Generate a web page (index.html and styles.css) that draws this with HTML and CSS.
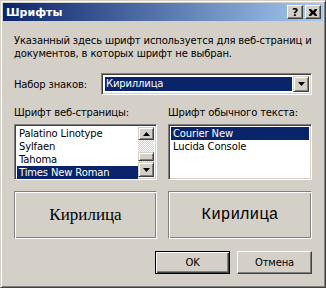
FILE: index.html
```html
<!DOCTYPE html>
<html lang="ru">
<head>
	<meta charset="UTF-8">
	<title>Шрифты</title>
	<link rel="stylesheet" href="styles.css">
</head>
<body>
	<div class="window">
		<div class="titlebar">
			<span class="title">Шрифты</span>
			<div class="tbtns">
				<span class="tbtn help">?</span>
				<span class="tbtn close">
					<svg width="8" height="7" viewBox="0 0 8 7"><path d="M0 0h2l2 2 2-2h2v1L6 3.5 8 6v1H6L4 5 2 7H0V6l2-2.5L0 1z" fill="#000"/></svg>
				</span>
			</div>
		</div>

		<div class="content">
			<p class="desc">Указанный здесь шрифт используется для веб-страниц и документов, в которых шрифт не выбран.</p>

			<div class="charset">
				<label>Набор знаков:</label>
				<div class="combo">
					<div class="combo_val"><span>Кириллица</span></div>
					<span class="arrowbtn">
						<svg width="7" height="4" viewBox="0 0 7 4"><path d="M0 0h7L3.5 4z" fill="#000"/></svg>
					</span>
				</div>
			</div>

			<div class="fonts">
				<div class="col">
					<div class="cap">Шрифт веб-страницы:</div>
					<div class="listbox">
						<ul>
							<li>Palatino Linotype</li>
							<li>Sylfaen</li>
							<li>Tahoma</li>
							<li class="cur">Times New Roman</li>
						</ul>
						<div class="vscroll">
							<span class="sbtn">
								<svg width="7" height="4" viewBox="0 0 7 4"><path d="M3.5 0L7 4H0z" fill="#000"/></svg>
							</span>
							<span class="track t1"></span>
							<span class="thumb"></span>
							<span class="track t2"></span>
							<span class="sbtn">
								<svg width="7" height="4" viewBox="0 0 7 4"><path d="M0 0h7L3.5 4z" fill="#000"/></svg>
							</span>
						</div>
					</div>
					<div class="preview serif">Кирилица</div>
				</div>
				<div class="col">
					<div class="cap">Шрифт обычного текста:</div>
					<div class="listbox">
						<ul>
							<li class="cur">Courier New</li>
							<li>Lucida Console</li>
						</ul>
					</div>
					<div class="preview mono">Кирилица</div>
				</div>
			</div>

			<div class="buttons">
				<button class="btn default">OK</button>
				<button class="btn">Отмена</button>
			</div>
		</div>
	</div>
</body>
</html>
```

FILE: styles.css
```css
*{
	margin: 0;
	padding: 0;
	box-sizing: border-box;
}
body{
	background: #d4d0c8;
	font-family: "DejaVu Sans", "Liberation Sans", sans-serif;
	font-size: 10px;
	letter-spacing: -0.15px;
	color: #000;
}
.window{
	width: 326px;
	height: 288px;
	background: #d4d0c8;
	border: 1px solid;
	border-color: #d4d0c8 #404040 #404040 #d4d0c8;
	box-shadow: inset 1px 1px 0 #fff, inset -1px -1px 0 #808080;
	padding: 2px;
}
.titlebar{
	height: 18px;
	background: linear-gradient(to right, #0a246a, #a6caf0);
	display: flex;
	align-items: center;
	justify-content: space-between;
	padding: 0 2px 0 3px;
}
.title{
	color: #fff;
	font-weight: bold;
	font-size: 11px;
	letter-spacing: 0;
}
.tbtns{
	display: flex;
	gap: 2px;
}
.tbtn{
	width: 16px;
	height: 14px;
	background: #d4d0c8;
	border: 1px solid;
	border-color: #fff #404040 #404040 #fff;
	box-shadow: inset -1px -1px 0 #808080;
	display: flex;
	align-items: center;
	justify-content: center;
	font-weight: bold;
	font-size: 11px;
	line-height: 1;
}
.content{
	padding: 11px 11px 0 11px;
}
.desc{
	line-height: 13px;
	margin: 2px -8px 0 0;
}
.charset{
	display: flex;
	align-items: center;
	justify-content: space-between;
	margin-top: 13px;
}
.combo{
	width: 211px;
	height: 22px;
	background: #fff;
	border: 1px solid;
	border-color: #808080 #fff #fff #808080;
	box-shadow: inset 1px 1px 0 #404040, inset -1px -1px 0 #d4d0c8;
	padding: 2px;
	display: flex;
}
.combo_val{
	flex: 1;
	padding: 1px;
}
.combo_val span{
	display: block;
	height: 100%;
	background: #0a246a;
	color: #fff;
	padding-left: 1px;
	line-height: 14px;
}
.arrowbtn, .sbtn{
	width: 16px;
	background: #d4d0c8;
	border: 1px solid;
	border-color: #d4d0c8 #404040 #404040 #d4d0c8;
	box-shadow: inset 1px 1px 0 #fff, inset -1px -1px 0 #808080;
	display: flex;
	align-items: center;
	justify-content: center;
}
.fonts{
	display: grid;
	grid-template-columns: 143px 144px;
	column-gap: 11px;
	margin-top: 11px;
}
.cap{
	line-height: 13px;
	margin-bottom: 5px;
}
.listbox{
	height: 56px;
	background: #fff;
	border: 1px solid;
	border-color: #808080 #fff #fff #808080;
	box-shadow: inset 1px 1px 0 #404040, inset -1px -1px 0 #d4d0c8;
	padding: 2px;
	display: flex;
}
.listbox ul{
	flex: 1;
	list-style: none;
}
.listbox li{
	height: 13px;
	line-height: 13px;
	padding-left: 2px;
}
.listbox li.cur{
	background: #0a246a;
	color: #fff;
}
.vscroll{
	width: 16px;
	display: flex;
	flex-direction: column;
}
.vscroll .sbtn{
	height: 13px;
	flex: none;
}
.vscroll .sbtn:last-child{
	height: 15px;
}
.track{
	display: block;
	background: repeating-conic-gradient(#d4d0c8 0 25%, #fff 0 50%) 0 0/2px 2px;
}
.t1{
	height: 12px;
}
.t2{
	flex: 1;
}
.thumb{
	display: block;
	height: 9px;
	background: #d4d0c8;
	border: 1px solid;
	border-color: #d4d0c8 #404040 #404040 #d4d0c8;
	box-shadow: inset 1px 1px 0 #fff, inset -1px -1px 0 #808080;
}
.preview{
	height: 48px;
	margin-top: 11px;
	border: 1px solid;
	border-color: #808080 #fff #fff #808080;
	box-shadow: 1px 1px 0 #fff inset, -1px -1px 0 #808080 inset;
	display: flex;
	align-items: center;
	justify-content: center;
	font-size: 16px;
	letter-spacing: 0;
}
.serif{
	font-family: "Liberation Serif", serif;
	font-size: 17px;
}
.mono{
	font-family: "Liberation Mono", monospace;
}
.buttons{
	display: flex;
	justify-content: flex-end;
	gap: 7px;
	margin-top: 12px;
}
.btn{
	width: 75px;
	height: 23px;
	background: #d4d0c8;
	border: 1px solid;
	border-color: #fff #404040 #404040 #fff;
	box-shadow: inset -1px -1px 0 #808080;
	font-family: "DejaVu Sans", sans-serif;
	font-size: 10px;
	letter-spacing: -0.15px;
	color: #000;
}
.btn.default{
	border: 1px solid #000;
	box-shadow: inset 1px 1px 0 #fff, inset -1px -1px 0 #404040, inset -2px -2px 0 #808080;
}
```
